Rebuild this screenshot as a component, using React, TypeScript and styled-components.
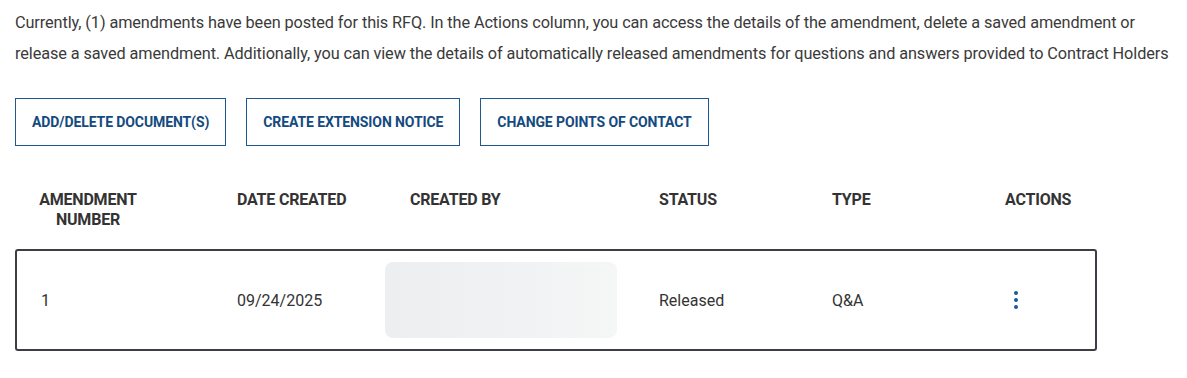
import styled, { createGlobalStyle } from 'styled-components';

const GlobalStyle = createGlobalStyle`
  html, body {
    margin: 0;
    padding: 0;
    background: #ffffff;
  }
  body {
    font-family: Roboto, "Liberation Sans", sans-serif;
    color: #333333;
  }
`;

const Page = styled.div`
  padding: 7px 15px 20px 15px;
  width: 1082px;
`;

const Intro = styled.p`
  margin: 0;
  font-size: 16.3px;
  line-height: 31px;
  color: #3a3a3a;
  white-space: nowrap;
  letter-spacing: -0.1px;
`;

const Toolbar = styled.div`
  display: flex;
  gap: 20px;
  margin-top: 29px;
`;

const ActionButton = styled.button`
  height: 48px;
  padding: 0 16px;
  background: #ffffff;
  border: 1px solid #1d5a91;
  border-radius: 0;
  color: #144a7e;
  font-family: Roboto, "Liberation Sans", sans-serif;
  font-weight: 700;
  font-size: 14px;
  letter-spacing: -0.1px;
  text-transform: uppercase;
  cursor: pointer;
`;

const cols = '220px 148px 274px 173px 173px 1fr';

const HeaderRow = styled.div`
  display: grid;
  grid-template-columns: ${cols};
  margin-top: 44px;
  padding: 0 2px;
  height: 49px;
`;

const HeadCell = styled.div<{ $center?: boolean; $pad?: number }>`
  font-size: 16px;
  font-weight: 700;
  line-height: 20px;
  color: #333333;
  letter-spacing: -0.2px;
  text-transform: uppercase;
  text-align: ${p => (p.$center ? 'center' : 'left')};
  padding-left: ${p => p.$pad ?? 0}px;
  width: ${p => (p.$center ? '100px' : 'auto')};
  margin-left: ${p => (p.$center ? '21px' : '0')};
`;

const DataRow = styled.div`
  display: grid;
  grid-template-columns: ${cols};
  align-items: center;
  margin-top: 10px;
  border: 2px solid #3b3f45;
  border-radius: 3px;
  height: 102px;
  box-sizing: border-box;
`;

const Cell = styled.div<{ $pad?: number }>`
  font-size: 16px;
  color: #333333;
  padding-left: ${p => p.$pad ?? 0}px;
`;

const Placeholder = styled.div`
  width: 232px;
  height: 76px;
  border-radius: 8px;
  background: linear-gradient(90deg, #eceef0 0%, #f1f2f3 60%, #f5f6f6 100%);
`;

const Kebab = styled.button`
  display: flex;
  flex-direction: column;
  gap: 3px;
  align-items: center;
  background: none;
  border: none;
  padding: 0;
  margin-left: 9px;
  cursor: pointer;

  span {
    width: 4px;
    height: 4px;
    border-radius: 50%;
    background: #1a5a96;
  }
`;

const App = () => {
  return (
    <Page>
      <GlobalStyle />
      <Intro>
        Currently, (1) amendments have been posted for this RFQ. In the Actions column, you can access the details of the amendment, delete a saved amendment or
        <br />
        release a saved amendment. Additionally, you can view the details of automatically released amendments for questions and answers provided to Contract Holders
      </Intro>

      <Toolbar>
        <ActionButton>Add/Delete Document(s)</ActionButton>
        <ActionButton>Create Extension Notice</ActionButton>
        <ActionButton>Change Points of Contact</ActionButton>
      </Toolbar>

      <HeaderRow>
        <HeadCell $center>Amendment Number</HeadCell>
        <HeadCell>Date Created</HeadCell>
        <HeadCell $pad={25}>Created By</HeadCell>
        <HeadCell>Status</HeadCell>
        <HeadCell>Type</HeadCell>
        <HeadCell>Actions</HeadCell>
      </HeaderRow>

      <DataRow>
        <Cell $pad={24}>1</Cell>
        <Cell>09/24/2025</Cell>
        <Cell>
          <Placeholder />
        </Cell>
        <Cell>Released</Cell>
        <Cell>Q&amp;A</Cell>
        <Cell>
          <Kebab aria-label="Actions">
            <span />
            <span />
            <span />
          </Kebab>
        </Cell>
      </DataRow>
    </Page>
  );
};

export default App;
